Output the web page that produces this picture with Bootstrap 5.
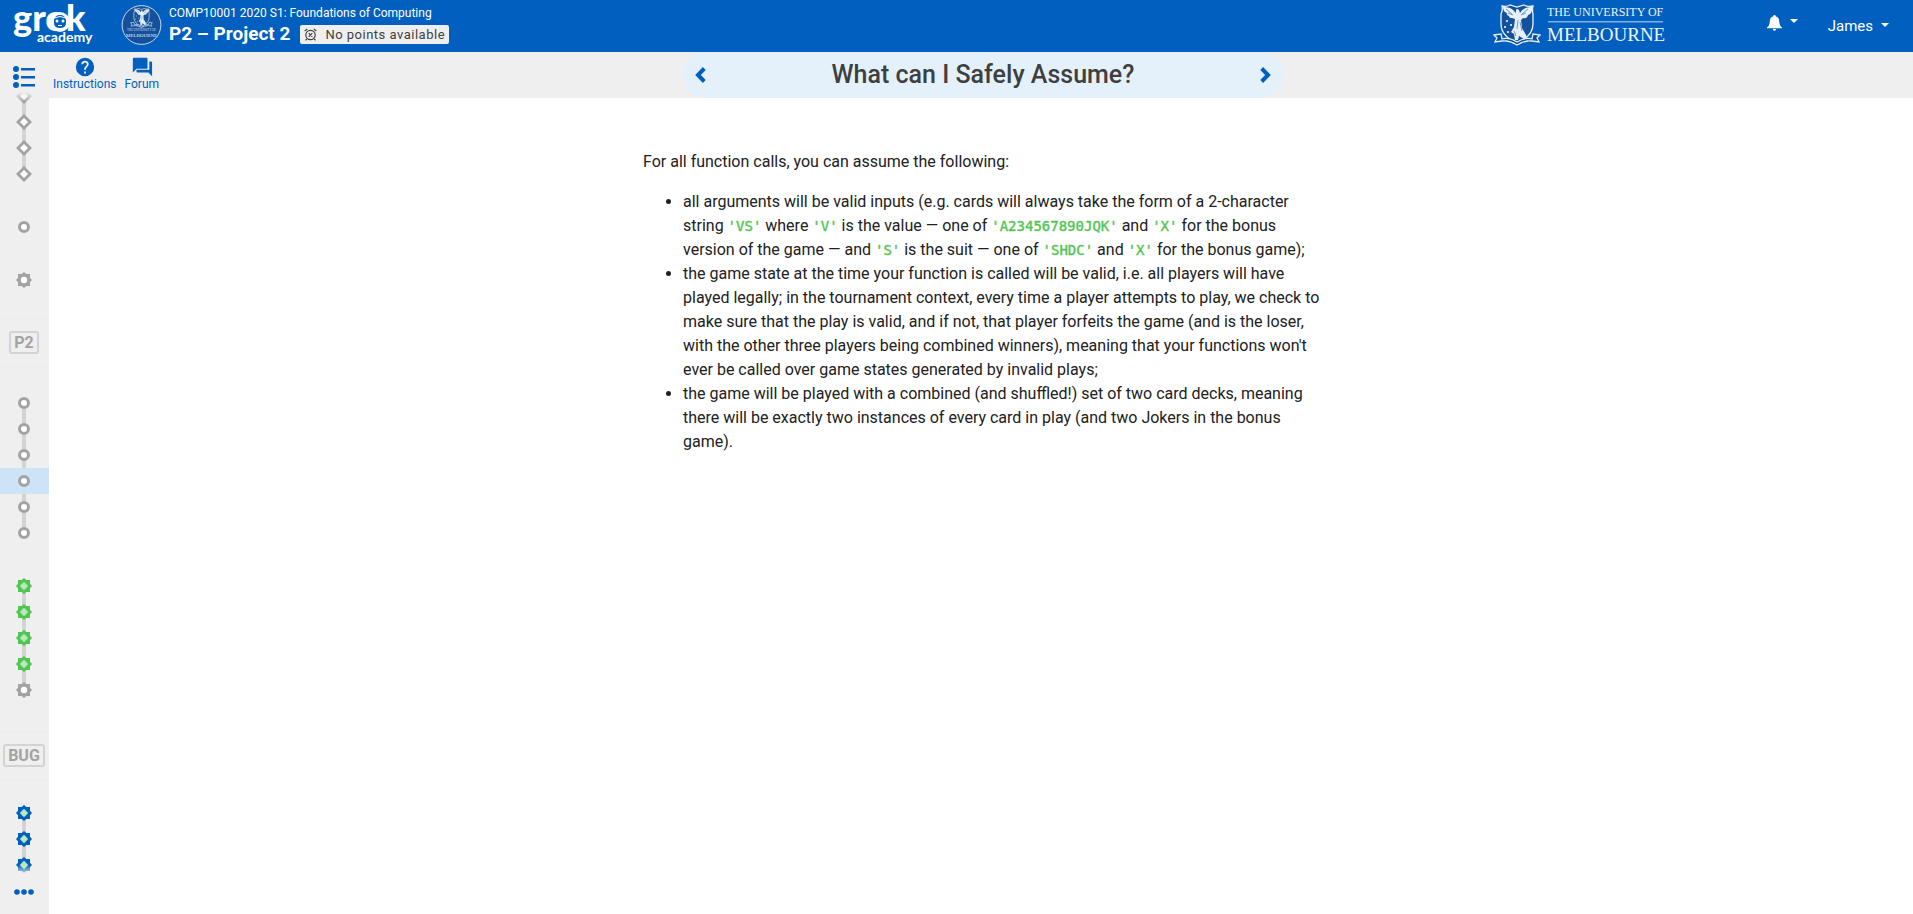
<!DOCTYPE html>
<html lang="en">
<head>
<meta charset="utf-8">
<meta name="viewport" content="width=device-width, initial-scale=1">
<title>What can I Safely Assume? – P2 – Project 2</title>
<link href="https://cdn.jsdelivr.net/npm/bootstrap@5.3.0/dist/css/bootstrap.min.css" rel="stylesheet">
<style>
:root { --brand: #005fbf; --panel: #efefef; --track: #d3d3d3; --node: #a3a3a3; --good: #51c552; }
body { font-family: Roboto, "Liberation Sans", sans-serif; font-size: 16px; line-height: 24px; color: #212121; }
a { color: var(--brand); text-decoration: none; }

.topbar { background: var(--brand); height: 52px; padding-left: 12px; padding-right: 24px; }
.topbar svg { overflow: visible; }
.crest-round { margin-left: 27px; margin-right: 7px; }
.course-name { font-size: 12px; line-height: 16px; font-weight: 400; margin-bottom: 3px; }
.module-row { gap: 10px; padding-bottom: 3px; }
.module-name { font-size: 19px; line-height: 20px; font-weight: 700; }
.points-tag { background: var(--panel); color: #3f3f3f; font-size: 13px; line-height: 19px; letter-spacing: .5px; border-radius: 2px; padding: 0 4px; }
.menu-btn { background: none; border: 0; padding: 0; color: #fff; font-size: 15px; line-height: 20px; }
.menu-btn.dropdown-toggle::after { border-top-width: 4px; border-left-width: 4px; border-right-width: 4px; margin-left: 8px; vertical-align: 4px; }
.bell-btn { margin-left: 102px; margin-right: 30px; margin-bottom: 8px; }

.siderail { width: 49px; background: var(--panel); }
.toc-btn { height: 40px; padding: 10px 1px 0 0; border: 0; background: none; line-height: 0; }
.toc-window { flex: 1 1 0; overflow: hidden; }
.toc-window::before, .toc-window::after { content: ""; position: absolute; left: 0; right: 0; height: 10px; z-index: 2; }
.toc-window::before { top: 0; background: linear-gradient(var(--panel), transparent); }
.toc-window::after { bottom: 0; background: linear-gradient(transparent, var(--panel)); }
.toc-scroll { margin-top: -9px; }
.toc-zone { display: grid; gap: 27px; padding: 23px 0 28px; }
.toc-zone:first-child { padding: 0 0 25px; }
.toc-zone:last-child { padding-top: 20px; }
.toc-group a { display: block; height: 26px; padding-right: 1px; line-height: 0; text-align: center; background: linear-gradient(var(--track), var(--track)) 22px 50% / 4px 100% no-repeat; }
.toc-group a:first-child { background-size: 4px 50%; background-position: 22px 100%; }
.toc-group a:last-child { background-size: 4px 50%; background-position: 22px 0; }
.toc-group a:only-child { background: none; }
.toc-scroll .toc-group.from-above a:first-child { background-size: 4px 100%; }
.toc-group a.current { background: #cde4f7; }
.toc-group a.passed { color: var(--good); }
.toc-group svg { width: 18px; height: 26px; }
.toc-label { height: 49px; border-top: 1px solid #ebebeb; border-bottom: 1px solid #ebebeb; padding-right: 1px; }
.toc-label span { border: 2px solid var(--track); border-radius: 3px; color: var(--node); font-size: 16px; line-height: 19px; font-weight: 700; padding: 0 3px; }
.toc-more { height: 39px; padding: 0 1px 5px 0; border: 0; background: none; line-height: 0; }

.toolbar { display: grid; grid-template-columns: 1fr minmax(0, 600px) 1fr; background: var(--panel); height: 46px; padding-left: 4px; }
.tool-link { font-size: 12px; line-height: 15px; text-align: center; padding-top: 5px; }
.tool-link svg { display: block; margin: 0 auto; }
.title-pill { background: #e4f1fb; border-radius: 23px; padding: 0 12px; }
.title-pill h1 { font-size: 25px; line-height: 46px; font-weight: 500; color: #3f3f3f; }
.pager { line-height: 0; }

.lesson { max-width: 700px; padding: 52px 12px 24px; }
.lesson ul { padding-left: 40px; margin-right: -8px; }
.lesson code { font-family: "DejaVu Sans Mono", monospace; font-size: 14px; line-height: 20px; color: var(--good); -webkit-text-stroke: .4px currentColor; }
</style>
</head>
<body class="d-flex flex-column vh-100">

<svg width="0" height="0" class="position-absolute" aria-hidden="true">
  <defs>
    <symbol id="n-diamond" viewBox="0 0 18 26"><path d="M9 5l8 8-8 8-8-8z" fill="#a3a3a3"/><path d="M9 9l4 4-4 4-4-4z" fill="#fff"/></symbol>
    <symbol id="n-circle" viewBox="0 0 18 26"><circle cx="9" cy="13" r="4.5" fill="#fff" stroke="#a3a3a3" stroke-width="3"/></symbol>
    <symbol id="n-gear" viewBox="0 0 18 26"><path d="M9 5l2.300 2H15v3.700L17 13l-2 2.300V19h-3.700L9 21l-2.300-2H3v-3.700L1 13l2-2.300V7h3.700z" fill="#a3a3a3"/><circle cx="9" cy="13" r="3.200" fill="#fff"/></symbol>
    <symbol id="n-star" viewBox="0 0 18 26"><path d="M9 5l2.300 2H15v3.700L17 13l-2 2.300V19h-3.700L9 21l-2.300-2H3v-3.700L1 13l2-2.300V7h3.700z" fill="currentColor"/><path d="M9 8.800l4.200 4.200L9 17.200 4.800 13z" fill="#b9e9b9"/></symbol>
    <symbol id="crest" viewBox="0 0 48 42">
      <path d="M9 2q5 1 8-1l7 2 7-2q3 2 9 1-1 4 0 8v10q0 12-16 19Q8 32 8 20V10q2-4 1-8z" fill="#15519b" stroke="#e8f1fb" stroke-width="1.300"/>
      <path d="M23 9q-5-7-13-6 0 5 4 6-1 2 2 3 0 2 3 2l3 1-1 8-3 5 3 2 1 6h3l1-4 5 3q3-1 2-4l-4-7-1-8 2-2q4 1 5-3 4-1 5-8-9-1-13 6l-1-3q-2-2-3 0z" fill="#e8f1fb"/>
      <path d="M13 5l6 5M15 9l5 2M35 5l-6 5M33 9l-5 2M25 16l-1 9M27 18l2 9M21 27l2 5" stroke="#4b84c6" stroke-width=".8" fill="none"/>
      <g fill="#fff"><circle cx="14" cy="17" r="1"/><circle cx="18" cy="21" r="1"/><circle cx="12" cy="23" r="1"/><circle cx="15" cy="28" r="1"/></g>
      <path d="M1 31l7-1 1 5q7-2 15 3 8-5 15-3l1-5 7 1-3 3 2 4-7-1q-7-1-15 4-8-5-15-4l-7 1 2-4z" fill="#0a4da0" stroke="#e8f1fb" stroke-width="1.300"/>
      <path d="M13 37l4 .8M19 38.500l3 1.300M26 40l3-1.300M31 38l4-1" stroke="#e8f1fb" stroke-width="1"/>
    </symbol>
  </defs>
</svg>

<header class="topbar d-flex align-items-center text-white flex-shrink-0">
  <a href="#" aria-label="Grok Academy">
    <svg width="82" height="52" viewBox="0 0 82 52" class="d-block" fill="#fff">
      <text x="1" y="31" font-family="Lato, sans-serif" font-weight="900" font-size="36">grok</text>
      <circle cx="48" cy="22" r="10"/>
      <path d="M42 20q1-5 6-5t6 5v3q0 5-6 5t-6-5z" fill="#005fbf"/>
      <path d="M42 18q6-3 12 0" fill="none" stroke="#fff" stroke-width="1"/>
      <circle cx="45" cy="21" r="1.500"/><circle cx="51" cy="21" r="1.500"/><path d="M46 25h4v1h-4z"/>
      <text x="25" y="42" font-family="Lato, sans-serif" font-weight="700" font-size="14">academy</text>
    </svg>
  </a>
  <svg class="crest-round flex-shrink-0" width="41" height="52" viewBox="0 0 41 52" role="img" aria-label="University crest">
    <circle cx="20.500" cy="25" r="19.400" fill="#15519b" stroke="#c3daf0" stroke-width="1"/>
    <use href="#crest" x="9" y="8" width="23" height="20"/>
    <text x="20.500" y="31" text-anchor="middle" font-family="Liberation Serif, serif" font-size="3" fill="#c3daf0">THE UNIVERSITY OF</text>
    <text x="20.500" y="37" text-anchor="middle" font-family="Liberation Serif, serif" font-size="5" fill="#e8f1fb">MELBOURNE</text>
  </svg>
  <div class="text-nowrap">
    <div class="course-name">COMP10001 2020 S1: Foundations of Computing</div>
    <div class="module-row d-flex align-items-center">
      <span class="module-name">P2 – Project 2</span>
      <span class="points-tag d-inline-flex align-items-center gap-2">
        <svg width="13" height="13" viewBox="0 0 13 13" fill="none" stroke="#3f3f3f" stroke-width="1.200"><circle cx="6.500" cy="7" r="4.700"/><path d="M.7 3L3.300.9M12.300 3L9.700.9M2.800 10.800l-1.300 1.500M10.200 10.800l1.300 1.500M4.700 5.200l3.600 3.600M8.300 5.200L4.700 8.800"/></svg>
        No points available
      </span>
    </div>
  </div>
  <div class="d-flex align-items-center ms-auto">
    <svg width="172" height="52" viewBox="0 0 172 52" role="img" aria-label="The University of Melbourne" fill="#eef5fc" font-family="Liberation Serif, serif">
      <use href="#crest" x="0" y="4" width="48" height="42"/>
      <text x="54" y="16" font-size="12">THE UNIVERSITY OF</text>
      <path d="M55 21h115v1.500H55z" fill="#7fb2e2"/>
      <text x="54" y="41" font-size="19">MELBOURNE</text>
    </svg>
    <button class="menu-btn bell-btn dropdown-toggle" aria-label="Notifications"><svg width="15" height="16" viewBox="0 0 15 16" fill="#fff"><path d="M7.500 0q1.200 0 1.200 1.300Q12 2.300 12.200 6q.2 5 2.800 6.500v.8H0v-.8Q2.600 11 2.800 6 3 2.300 6.300 1.300 6.300 0 7.500 0zM5.800 14h3.400q-.2 1.800-1.700 1.800T5.800 14z"/></svg></button>
    <button class="menu-btn dropdown-toggle">James</button>
  </div>
</header>

<div class="d-flex flex-grow-1">
  <nav class="siderail d-flex flex-column flex-shrink-0" aria-label="Contents">
    <button class="toc-btn" aria-label="Show contents">
      <svg width="23" height="24" viewBox="0 0 23 24" fill="#005fbf"><circle cx="3" cy="4" r="3"/><circle cx="3" cy="12" r="3"/><circle cx="3" cy="20" r="3"/><path d="M8 3h14v2.500H8zM8 11h14v2.500H8zM8 19h14v2.500H8z"/></svg>
    </button>
    <div class="toc-window position-relative">
      <div class="toc-scroll">
        <div class="toc-zone">
          <div class="toc-group from-above">
            <a href="#" aria-label="Problem"><svg><use href="#n-diamond"/></svg></a>
            <a href="#" aria-label="Problem"><svg><use href="#n-diamond"/></svg></a>
            <a href="#" aria-label="Problem"><svg><use href="#n-diamond"/></svg></a>
            <a href="#" aria-label="Problem"><svg><use href="#n-diamond"/></svg></a>
          </div>
          <div class="toc-group"><a href="#" aria-label="Slide"><svg><use href="#n-circle"/></svg></a></div>
          <div class="toc-group"><a href="#" aria-label="Question"><svg><use href="#n-gear"/></svg></a></div>
        </div>
        <div class="toc-label d-flex align-items-center justify-content-center"><span>P2</span></div>
        <div class="toc-zone">
          <div class="toc-group">
            <a href="#" aria-label="Slide 1"><svg><use href="#n-circle"/></svg></a>
            <a href="#" aria-label="Slide 2"><svg><use href="#n-circle"/></svg></a>
            <a href="#" aria-label="Slide 3"><svg><use href="#n-circle"/></svg></a>
            <a href="#" class="current" aria-current="page" aria-label="Slide 4"><svg><use href="#n-circle"/></svg></a>
            <a href="#" aria-label="Slide 5"><svg><use href="#n-circle"/></svg></a>
            <a href="#" aria-label="Slide 6"><svg><use href="#n-circle"/></svg></a>
          </div>
          <div class="toc-group">
            <a href="#" class="passed" aria-label="Question 1"><svg><use href="#n-star"/></svg></a>
            <a href="#" class="passed" aria-label="Question 2"><svg><use href="#n-star"/></svg></a>
            <a href="#" class="passed" aria-label="Question 3"><svg><use href="#n-star"/></svg></a>
            <a href="#" class="passed" aria-label="Question 4"><svg><use href="#n-star"/></svg></a>
            <a href="#" aria-label="Question 5"><svg><use href="#n-gear"/></svg></a>
          </div>
        </div>
        <div class="toc-label d-flex align-items-center justify-content-center"><span>BUG</span></div>
        <div class="toc-zone">
          <div class="toc-group">
            <a href="#" aria-label="Bug 1"><svg><use href="#n-star"/></svg></a>
            <a href="#" aria-label="Bug 2"><svg><use href="#n-star"/></svg></a>
            <a href="#" aria-label="Bug 3"><svg><use href="#n-star"/></svg></a>
          </div>
        </div>
      </div>
    </div>
    <button class="toc-more" aria-label="More"><svg width="20" height="6" viewBox="0 0 20 6" fill="#005fbf"><circle cx="3" cy="3" r="2.800"/><circle cx="10" cy="3" r="2.800"/><circle cx="17" cy="3" r="2.800"/></svg></button>
  </nav>

  <div class="flex-grow-1">
    <div class="toolbar">
      <div class="d-flex gap-2">
        <a href="#" class="tool-link"><svg width="20" height="20" viewBox="0 0 24 24" fill="currentColor"><path d="M12 1a11 11 0 1 0 0 22 11 11 0 0 0 0-22zm1.100 18.700h-2.200v-2.200h2.200zm2.300-8.500l-1 1c-.8.800-1.300 1.500-1.300 3.100h-2.200v-.5c0-1.200.5-2.300 1.300-3.100l1.400-1.400c.4-.4.600-1 .6-1.500a2.200 2.200 0 0 0-4.400 0H7.600a4.400 4.400 0 0 1 8.800 0c0 1-.4 1.800-1 2.400z"/></svg>Instructions</a>
        <a href="#" class="tool-link"><svg width="22" height="20" viewBox="0 0 24 20" fill="currentColor"><path d="M3 0h14q1 0 1 1v10q0 1-1 1H6l-4 4V1q0-1 1-1zM20 4h2q1 0 1 1v15l-4-4H7q-1 0-1-1v-2h14z"/></svg>Forum</a>
      </div>
      <div class="title-pill d-flex align-items-center justify-content-between">
        <a href="#" class="pager" aria-label="Previous"><svg width="11" height="16" viewBox="0 0 11 16" fill="none" stroke="currentColor" stroke-width="4"><path d="M9.300 1.500L3 8l6.300 6.500"/></svg></a>
        <h1 class="m-0">What can I Safely Assume?</h1>
        <a href="#" class="pager" aria-label="Next"><svg width="11" height="16" viewBox="0 0 11 16" fill="none" stroke="currentColor" stroke-width="4"><path d="M1.700 1.500L8 8l-6.300 6.500"/></svg></a>
      </div>
    </div>
    <main class="lesson mx-auto">
      <p class="mb-3">For all function calls, you can assume the following:</p>
      <ul class="mb-3">
        <li>all arguments will be valid inputs (e.g. cards will always take the form of a 2-character string <code>'VS'</code> where <code>'V'</code> is the value — one of <code>'A234567890JQK'</code> and <code>'X'</code> for the bonus version of the game — and <code>'S'</code> is the suit — one of <code>'SHDC'</code> and <code>'X'</code> for the bonus game);</li>
        <li>the game state at the time your function is called will be valid, i.e. all players will have played legally; in the tournament context, every time a player attempts to play, we check to make sure that the play is valid, and if not, that player forfeits the game (and is the loser, with the other three players being combined winners), meaning that your functions won't ever be called over game states generated by invalid plays;</li>
        <li>the game will be played with a combined (and shuffled!) set of two card decks, meaning there will be exactly two instances of every card in play (and two Jokers in the bonus game).</li>
      </ul>
    </main>
  </div>
</div>
<script src="https://cdn.jsdelivr.net/npm/bootstrap@5.3.0/dist/js/bootstrap.bundle.min.js"></script>
</body>
</html>
